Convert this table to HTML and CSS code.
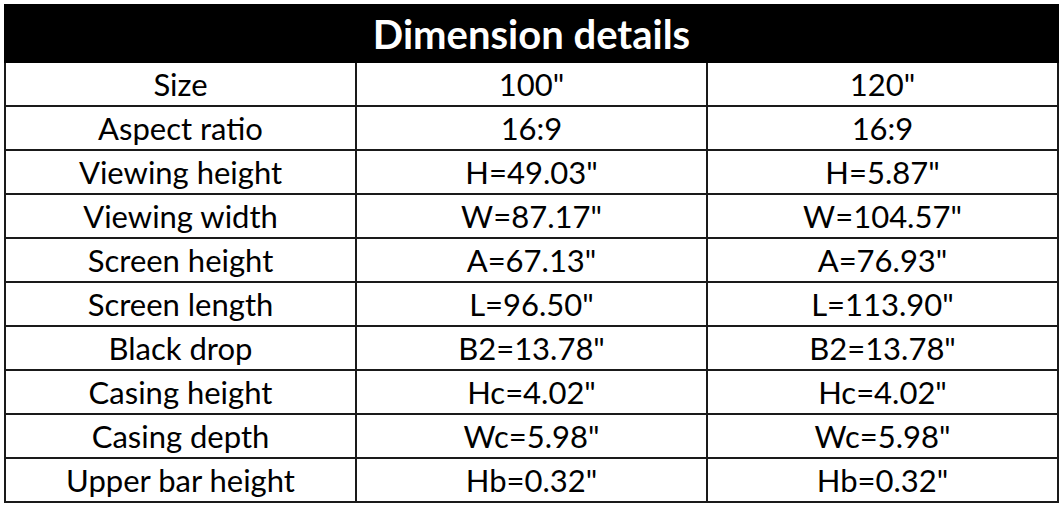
FILE: index.html
```html
<!DOCTYPE html>
<html lang="en">
  <head>
    <meta charset="UTF-8" />
    <meta name="viewport" content="width=device-width, initial-scale=1.0" />
    <title>Dimension details</title>
    <link rel="stylesheet" href="styles.css">
  </head>
  <body>
    <table class="details">
      <thead>
        <tr>
          <th colspan="3">Dimension details</th>
        </tr>
      </thead>
      <tbody>
        <tr><td>Size</td><td>100"</td><td>120"</td></tr>
        <tr><td>Aspect ratio</td><td>16:9</td><td>16:9</td></tr>
        <tr><td>Viewing height</td><td>H=49.03"</td><td>H=5.87"</td></tr>
        <tr><td>Viewing width</td><td>W=87.17"</td><td>W=104.57"</td></tr>
        <tr><td>Screen height</td><td>A=67.13"</td><td>A=76.93"</td></tr>
        <tr><td>Screen length</td><td>L=96.50"</td><td>L=113.90"</td></tr>
        <tr><td>Black drop</td><td>B2=13.78"</td><td>B2=13.78"</td></tr>
        <tr><td>Casing height</td><td>Hc=4.02"</td><td>Hc=4.02"</td></tr>
        <tr><td>Casing depth</td><td>Wc=5.98"</td><td>Wc=5.98"</td></tr>
        <tr><td>Upper bar height</td><td>Hb=0.32"</td><td>Hb=0.32"</td></tr>
      </tbody>
    </table>
  </body>
</html>
```

FILE: styles.css
```css
body {
  margin: 0;
  padding: 4px 0 0 4px;
  background-color: #fff;
  font-family: Lato, "Liberation Sans", sans-serif;
  color: #000;
}
.details {
  width: 1055px;
  border-collapse: collapse;
  table-layout: fixed;
}
.details th {
  height: 55px;
  padding: 0;
  background-color: #000;
  color: #fff;
  font-size: 40px;
  font-weight: 700;
  line-height: 1;
  border: 2px solid #000;
}
.details td {
  width: 33.33%;
  height: 42px;
  padding: 0;
  text-align: center;
  font-size: 31px;
  border: 2px solid #1a1a1a;
}
```
